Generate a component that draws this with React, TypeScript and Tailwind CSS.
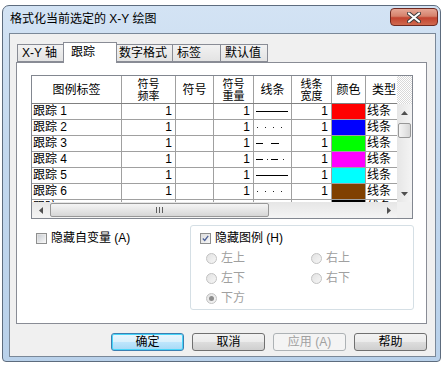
import React from "react";

const FONT = "font-['Liberation_Sans','Noto_Sans_CJK_SC',sans-serif]";

const rows = [
  { n: 1, color: "bg-[#ff0000]", line: "solid" },
  { n: 2, color: "bg-[#0000ff]", line: "dot" },
  { n: 3, color: "bg-[#00ff00]", line: "dash" },
  { n: 4, color: "bg-[#ff00ff]", line: "dashdot" },
  { n: 5, color: "bg-[#00ffff]", line: "solid" },
  { n: 6, color: "bg-[#804000]", line: "dot" },
  { n: 7, color: "bg-[#000000]", line: "solid" },
];

const GRID = "grid grid-cols-[90px_54px_38px_40px_38px_40px_34px_31px]";

const LineSample = ({ kind }: { kind: string }) => (
  <svg width="37" height="15" viewBox="0 0 37 15">
    {kind === "solid" && <rect x="2" y="7" width="32" height="1" fill="#000" />}
    {kind === "dot" &&
      [3, 11, 19, 27].map((x) => (
        <rect key={x} x={x} y="7" width="1" height="1" fill="#222" />
      ))}
    {kind === "dash" && (
      <>
        <rect x="2" y="7" width="7" height="1" fill="#000" />
        <rect x="17" y="7" width="8" height="1" fill="#000" />
      </>
    )}
    {kind === "dashdot" && (
      <>
        <rect x="2" y="7" width="7" height="1" fill="#000" />
        <rect x="13" y="7" width="1" height="1" fill="#222" />
        <rect x="17" y="7" width="7" height="1" fill="#000" />
        <rect x="29" y="7" width="1" height="1" fill="#222" />
      </>
    )}
  </svg>
);

const Arrow = ({ dir }: { dir: "up" | "down" | "left" | "right" }) => {
  const pts = {
    up: "0,4 3.5,0 7,4",
    down: "0,0 7,0 3.5,4",
    left: "4,0 4,7 0,3.5",
    right: "0,0 0,7 4,3.5",
  }[dir];
  const vertical = dir === "up" || dir === "down";
  return (
    <svg width={vertical ? 7 : 4} height={vertical ? 4 : 7}>
      <polygon points={pts} fill="#505050" />
    </svg>
  );
};

const CheckBox = ({ checked }: { checked?: boolean }) => (
  <div className="w-[11px] h-[11px] border border-[#8e8f8f] bg-[linear-gradient(135deg,#dcdcdc,#f7f7f7)] p-[1px] flex items-center justify-center">
    {checked ? (
      <svg width="9" height="9" viewBox="0 0 9 9">
        <path d="M1 4.5 L3.5 7 L8 1" stroke="#4a5f97" strokeWidth="1.6" fill="none" />
      </svg>
    ) : (
      <div className="w-full h-full bg-[linear-gradient(135deg,#cbcfd5,#f4f4f4)]" />
    )}
  </div>
);

const Radio = ({ label, selected }: { label: string; selected?: boolean }) => (
  <div className="flex items-center gap-[4px] h-[16px]">
    <div className="w-[11px] h-[11px] rounded-full border border-[#c2c2c2] bg-[linear-gradient(135deg,#e2e2e2,#f6f6f6)] flex items-center justify-center">
      {selected && <div className="w-[5px] h-[5px] rounded-full bg-[#8d8d8d]" />}
    </div>
    <span className="text-[#a0a0a0]">{label}</span>
  </div>
);

const Button = ({
  label,
  focused,
  disabled,
}: {
  label: string;
  focused?: boolean;
  disabled?: boolean;
}) => (
  <div
    className={`w-[73px] h-[18px] rounded-[3px] border flex items-center justify-center text-[12px] ${
      focused
        ? "border-[#3c7fb1] shadow-[inset_0_0_0_1px_#48d5f9] bg-[linear-gradient(to_bottom,#eaf6fd_0%,#d9f0fc_50%,#bee6fd_51%,#a7d9f5_100%)]"
        : disabled
        ? "border-[#adb2b5] bg-[#f4f4f4] text-[#a0a0a0]"
        : "border-[#707070] bg-[linear-gradient(to_bottom,#f2f2f2_0%,#ebebeb_50%,#dddddd_51%,#cfcfcf_100%)]"
    }`}
  >
    {label}
  </div>
);

const Tab = ({ label, w, selected }: { label: string; w: string; selected?: boolean }) => (
  <div
    className={`${w} flex items-center whitespace-nowrap border border-[#898c95] ${
      selected
        ? "h-[21px] -mb-[1px] border-b-0 bg-white z-10 -mx-[2px] pl-[7px] pb-[3px]"
        : "h-[18px] -ml-[1px] first:ml-0 bg-[linear-gradient(to_bottom,#f2f2f2,#e3e3e3)] pl-[4px]"
    }`}
  >
    {label}
  </div>
);

const Head2 = ({ a, b }: { a: string; b: string }) => (
  <div className="border-r border-[#a0a0a0] flex flex-col items-center justify-center text-[11px] leading-[12px]">
    <span>{a}</span>
    <span>{b}</span>
  </div>
);

export default function App() {
  return (
    <div className={`w-[447px] h-[367px] bg-white overflow-hidden pt-[5px] pl-[2px] text-[12px] text-black ${FONT}`}>
      {/* window */}
      <div className="w-[439px] h-[357px] rounded-t-[7px] rounded-b-[4px] border border-[#5d6c7e] bg-[linear-gradient(to_bottom,#d3e3f4,#c3d8ee_40%,#b9d1ea)] flex flex-col pl-[6px] pr-[4px] pb-[4px]">
        {/* title bar */}
        <div className="h-[27px] flex justify-between">
          <span className="pl-[1px] pt-[5px] text-[12px] leading-[16px]">格式化当前选定的 X-Y 绘图</span>
          <div className="mt-[2px] -mr-[2px] w-[48px] h-[18px] rounded-[4px] border border-[#6e2a22] bg-[linear-gradient(to_bottom,#e6a795_0%,#d5826c_45%,#c24430_55%,#d06a4f_100%)] flex items-center justify-center">
            <svg width="14" height="11" viewBox="0 0 14 11">
              <path d="M2 1.5 L12 9.5 M12 1.5 L2 9.5" stroke="#3a3a3a" strokeWidth="4" strokeLinecap="round" />
              <path d="M2 1.5 L12 9.5 M12 1.5 L2 9.5" stroke="#ffffff" strokeWidth="2.2" strokeLinecap="round" />
            </svg>
          </div>
        </div>

        {/* client area */}
        <div className="flex-1 border border-[#7a8898] bg-[#f0f0f0] flex flex-col pl-[6px] pr-[8px] pt-[7px]">
          {/* tabs */}
          <div className="h-[21px] flex items-end pl-[1px] leading-[14px]">
            <Tab label="X-Y 轴" w="w-[48px]" />
            <Tab label="跟踪" w="w-[54px]" selected />
            <Tab label="数字格式" w="w-[59px]" />
            <Tab label="标签" w="w-[49px]" />
            <Tab label="默认值" w="w-[48px]" />
          </div>

          {/* tab panel */}
          <div className="h-[262px] border border-[#898c95] bg-white flex flex-col pl-[14px] pt-[12px]">
            {/* table */}
            <div className="w-[382px] h-[144px] border border-[#828790] flex flex-col">
              <div className="h-[126px] flex">
                <div className="w-[365px] overflow-hidden">
                  <div className={`${GRID} h-[28px] border-b border-[#808080] leading-[12px] text-center`}>
                    <div className="border-r border-[#a0a0a0] flex items-center justify-center">图例标签</div>
                    <Head2 a="符号" b="频率" />
                    <div className="border-r border-[#a0a0a0] flex items-center justify-center">符号</div>
                    <Head2 a="符号" b="重量" />
                    <div className="border-r border-[#a0a0a0] flex items-center justify-center">线条</div>
                    <Head2 a="线条" b="宽度" />
                    <div className="border-r border-[#a0a0a0] flex items-center justify-center">颜色</div>
                    <div className="flex items-center justify-end pr-[1px]">类型</div>
                  </div>
                  {rows.map((r) => (
                    <div key={r.n} className={`${GRID} h-[16px] border-b border-[#a0a0a0] leading-[15px]`}>
                      <div className="border-r border-[#a0a0a0] pl-[1px]">跟踪 {r.n}</div>
                      <div className="border-r border-[#a0a0a0] text-right pr-[3px]">1</div>
                      <div className="border-r border-[#a0a0a0]" />
                      <div className="border-r border-[#a0a0a0] text-right pr-[3px]">1</div>
                      <div className="border-r border-[#a0a0a0]">
                        <LineSample kind={r.line} />
                      </div>
                      <div className="border-r border-[#a0a0a0] text-right pr-[3px]">1</div>
                      <div className={`border-r border-[#a0a0a0] ${r.color}`} />
                      <div className="pl-[1px] whitespace-nowrap overflow-hidden">线条</div>
                    </div>
                  ))}
                </div>
                {/* vertical scrollbar */}
                <div className="w-[15px] flex flex-col">
                  <div className="h-[28px] bg-[repeating-conic-gradient(#d8d8d8_0_25%,#ffffff_0_50%)] bg-size-[2px_2px]" />
                  <div className="flex-1 bg-[linear-gradient(to_right,#e6e6e6,#f4f4f4)] flex flex-col items-center">
                    <div className="h-[17px] flex items-center justify-center">
                      <Arrow dir="up" />
                    </div>
                    <div className="mt-[2px] w-[13px] h-[15px] rounded-[2px] border border-[#979797] bg-[linear-gradient(to_right,#f4f4f4,#e6e6e6_50%,#d6d6d6)]" />
                    <div className="flex-1" />
                    <div className="h-[17px] flex items-center justify-center">
                      <Arrow dir="down" />
                    </div>
                  </div>
                </div>
              </div>
              {/* horizontal scrollbar */}
              <div className="flex-1 flex">
                <div className="w-[365px] flex items-center bg-[linear-gradient(to_bottom,#e6e6e6,#f4f4f4)]">
                  <div className="w-[17px] flex justify-center">
                    <Arrow dir="left" />
                  </div>
                  <div className="ml-[1px] w-[219px] h-[14px] rounded-[2px] border border-[#979797] bg-[linear-gradient(to_bottom,#f4f4f4,#e6e6e6_50%,#d6d6d6)] flex items-center justify-center gap-[2px]">
                    <div className="w-[1px] h-[6px] bg-[#5f5f5f]" />
                    <div className="w-[1px] h-[6px] bg-[#5f5f5f]" />
                    <div className="w-[1px] h-[6px] bg-[#5f5f5f]" />
                  </div>
                  <div className="flex-1" />
                  <div className="w-[17px] flex justify-center">
                    <Arrow dir="right" />
                  </div>
                </div>
                <div className="flex-1 bg-[#f0f0f0]" />
              </div>
            </div>

            {/* options */}
            <div className="flex mt-[6px]">
              <div className="w-[159px] pl-[5px] pt-[5px]">
                <div className="flex items-center gap-[4px] h-[16px]">
                  <CheckBox />
                  <span>隐藏自变量 (A)</span>
                </div>
              </div>
              <div className="w-[224px] h-[85px] rounded-[3px] border border-[#d5dfe5] pt-[4px] pl-[9px]">
                <div className="flex items-center gap-[4px] h-[16px]">
                  <CheckBox checked />
                  <span>隐藏图例 (H)</span>
                </div>
                <div className="pl-[6px] mt-[4px] grid grid-cols-[105px_100px] gap-y-[4px]">
                  <Radio label="左上" />
                  <Radio label="右上" />
                  <Radio label="左下" />
                  <Radio label="右下" />
                  <Radio label="下方" selected />
                </div>
              </div>
            </div>
          </div>

          {/* buttons */}
          <div className="mt-[9px] flex justify-end gap-[8px]">
            <Button label="确定" focused />
            <Button label="取消" />
            <Button label="应用 (A)" disabled />
            <Button label="帮助" />
          </div>
        </div>
      </div>
    </div>
  );
}
